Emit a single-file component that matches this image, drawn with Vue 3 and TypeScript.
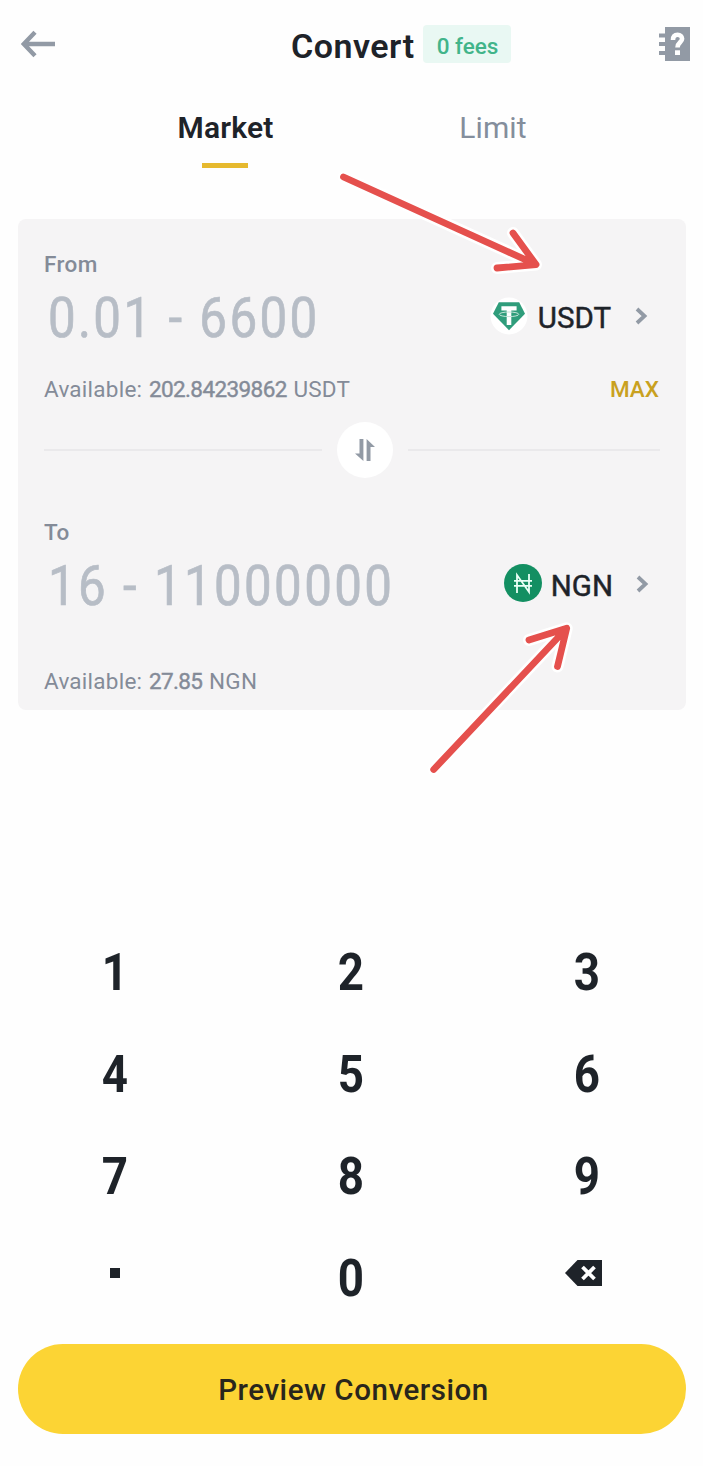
<script setup lang="ts">
import { ref } from 'vue'

const tabs = ['Market', 'Limit']
const active = ref('Market')
const keys = ['1', '2', '3', '4', '5', '6', '7', '8', '9', '.', '0', 'del']
</script>

<template>
  <main class="screen">
    <header class="header">
      <button class="icon-btn back" aria-label="Back">
        <svg width="34" height="28" viewBox="0 0 34 28">
          <path d="M14 2.200 2.800 14 14 25.800M3 14h31" fill="none" stroke="#929aa5" stroke-width="4.400" />
        </svg>
      </button>
      <h1 class="title">Convert</h1>
      <span class="badge">0 fees</span>
      <button class="icon-btn help" aria-label="Help">
        <svg width="31" height="34" viewBox="0 0 31 34">
          <path d="M6 0h25v34H6v-6H0v-4h6v-5H0v-4h6v-4.500H0v-4h6z" fill="#929aa5" />
          <path d="M14 13c0-3.700 1.800-5.200 4.600-5.200 2.700 0 4.500 1.500 4.500 4 0 3.600-4.600 3.500-4.600 8.700" fill="none" stroke="#fff" stroke-width="4.600" />
          <path d="M16 23.300h5v4.700h-5z" fill="#fff" />
        </svg>
      </button>
    </header>

    <nav class="tabs">
      <button v-for="t in tabs" :key="t" class="tab" :class="{ active: t === active }" @click="active = t">
        <span>{{ t }}</span>
      </button>
    </nav>

    <section class="card">
      <div class="label">From</div>
      <div class="row">
        <span class="amount">0.01 - 6600</span>
        <span class="coin tether">
          <svg width="38" height="38" viewBox="0 0 38 38">
            <circle cx="19" cy="19" r="18.500" fill="#fff" />
            <path d="M8.800 5.200h20.400l5.800 11.600L19 33.300 3 16.800z" fill="#2f9d7b" />
            <path d="M11.400 9.200h15.200v4.300h-5.300v14.500h-4.600v-14.500h-5.300z" fill="#fff" />
            <ellipse cx="19" cy="17.300" rx="9.800" ry="2.300" fill="none" stroke="#c5e4d9" stroke-width="1" />
          </svg>
          <span class="code usdt">USDT</span>
          <svg class="chev" width="13" height="18" viewBox="0 0 13 18">
            <path d="m2 2 7.500 7L2 16" fill="none" stroke="#929aa5" stroke-width="3.800" />
          </svg>
        </span>
      </div>
      <div class="row avail">
        <span class="bal">Available: <b>202.84239862</b> USDT</span>
        <span class="max">MAX</span>
      </div>
      <div class="divider">
        <i class="line left"></i>
        <button class="swap" aria-label="Swap">
          <svg width="20" height="22" viewBox="0 0 20 22">
            <path d="M4.500 0h3.900v22L0 14.500h4.500zM11.600 22V0L20 8h-4.500v14z" fill="#929aa5" />
          </svg>
        </button>
        <i class="line right"></i>
      </div>
      <div class="label to">To</div>
      <div class="row">
        <span class="amount second">16 - 11000000</span>
        <span class="coin naira">
          <svg width="38" height="38" viewBox="0 0 38 38">
            <circle cx="19" cy="19" r="19" fill="#138f62" />
            <path d="M13 29V11L25 28V10M10 16.800h18M10 21.800h18" fill="none" stroke="#e9fff6" stroke-width="1.800" />
          </svg>
          <span class="code ngn">NGN</span>
          <svg class="chev" width="13" height="18" viewBox="0 0 13 18">
            <path d="m2 2 7.500 7L2 16" fill="none" stroke="#929aa5" stroke-width="3.800" />
          </svg>
        </span>
      </div>
      <div class="row avail last">
        <span class="bal">Available: <b>27.85</b> NGN</span>
      </div>
    </section>

    <section class="keypad">
      <button v-for="k in keys" :key="k" class="key">
        <svg v-if="k === 'del'" class="del" width="37" height="26" viewBox="0 0 37 26">
          <path d="M12.500 0H37v26H12.500L0 13z" fill="#1e2329" />
          <path d="m17.500 7 12 12M29.500 7l-12 12" stroke="#fff" stroke-width="3.800" />
        </svg>
        <i v-else-if="k === '.'" class="dot"></i>
        <span v-else class="digit">{{ k }}</span>
      </button>
    </section>

    <button class="cta"><span>Preview Conversion</span></button>

    <svg class="arrows" width="703" height="1466" viewBox="0 0 703 1466">
      <g fill="none" stroke-linecap="round" stroke-linejoin="round">
        <g stroke="#fff" stroke-width="12">
          <path d="M343.500 177 536 264.500M513 233l23 31.600L497 268" />
          <path d="M433.700 769.500 566.500 628.500M529 640l37.700-11.700-9.200 38.200" />
        </g>
        <g stroke="#e5504d" stroke-width="6.800">
          <path d="M343.500 177 536 264.500M513 233l23 31.600L497 268" />
          <path d="M433.700 769.500 566.500 628.500M529 640l37.700-11.700-9.200 38.200" />
        </g>
      </g>
    </svg>
  </main>
</template>

<style>
body {
  margin: 0;
  background: #fefefe;
}
</style>

<style scoped>
.screen {
  position: relative;
  width: 703px;
  height: 1466px;
  overflow: hidden;
  background: #fefefe;
  color: #1e2329;
  font-family: Roboto, "Liberation Sans", sans-serif;
}
button {
  border: 0;
  padding: 0;
  background: none;
  font: inherit;
  color: inherit;
}
svg {
  display: block;
  flex: none;
}
.header {
  display: flex;
  align-items: center;
  height: 88px;
  padding: 0 13px 0 21px;
}
.title {
  margin: 0 0 0 236px;
  padding-top: 4px;
  width: 132px;
  font-size: 34px;
  line-height: 40px;
  font-weight: 600;
  letter-spacing: 0.5px;
  white-space: nowrap;
}
.badge {
  width: 88px;
  height: 38px;
  border-radius: 4px;
  background: #e9f8f3;
  color: #42b48a;
  font-size: 22.5px;
  font-weight: 500;
  line-height: 42px;
  text-align: center;
  text-indent: 1px;
}
.help {
  margin-left: auto;
}
.tabs {
  display: grid;
  grid-template-columns: 267px 267px;
  margin-left: 91px;
  padding-top: 10px;
}
.tab {
  display: flex;
  flex-direction: column;
  align-items: center;
  height: 70px;
  color: #848e9c;
  font-size: 30px;
  line-height: 60px;
  letter-spacing: 0.1px;
  text-indent: 3px;
}
.tab.active {
  color: #1e2329;
  font-weight: 600;
  letter-spacing: 0.2px;
  text-indent: 2px;
}
.tab.active::after {
  content: "";
  width: 46px;
  height: 5px;
  margin-top: 5px;
  background: #e6b92e;
}
.card {
  box-sizing: border-box;
  width: 668px;
  height: 491px;
  margin: 51px 0 0 18px;
  padding: 30px 26px 0;
  border-radius: 8px;
  background: #f5f4f5;
  color: #848b98;
  font-size: 22.5px;
  line-height: 30px;
}
.label {
  font-weight: 500;
  letter-spacing: 0.4px;
  margin-bottom: 9px;
}
.row {
  display: flex;
  align-items: center;
  justify-content: space-between;
  height: 60px;
}
.amount {
  width: 380px;
  margin-left: 4px;
  color: #b7bdc6;
  font-size: 56px;
  line-height: 60px;
  letter-spacing: 2.65px;
  word-spacing: 0.5px;
  white-space: nowrap;
  transform: scaleX(0.88);
  transform-origin: left;
  -webkit-text-stroke: 0.7px #b7bdc6;
}
.coin {
  display: flex;
  align-items: center;
  padding-right: 12px;
}
.coin svg {
  margin-top: -4px;
}
.naira {
  padding-right: 11px;
}
.naira svg:first-child {
  margin-top: -6px;
}
.code {
  margin-left: 10px;
  color: #1e2329;
  font-size: 29.5px;
  line-height: 60px;
  -webkit-text-stroke: 0.45px #1e2329;
}
.ngn {
  margin-left: 9px;
}
.chev {
  margin-left: 24px;
}
.naira .chev {
  margin-left: 23px;
}
.avail {
  height: 30px;
  margin-top: 26px;
}
.bal {
  letter-spacing: 0.25px;
  word-spacing: 0.8px;
}
.bal b {
  font-weight: 400;
  letter-spacing: -0.6px;
  -webkit-text-stroke: 0.4px #848b98;
}
.max {
  padding-right: 1px;
  color: #c9a11f;
  font-weight: 500;
}
.divider {
  display: flex;
  align-items: center;
  height: 56px;
  margin: 18px 0 39px;
}
.line {
  height: 2px;
  background: #eae9eb;
}
.left {
  width: 278px;
}
.right {
  width: 252px;
}
.swap {
  display: grid;
  place-items: center;
  width: 56px;
  height: 56px;
  margin: 0 15px;
  border-radius: 50%;
  background: #fff;
}
.last {
  margin-top: 50px;
}
.keypad {
  display: grid;
  grid-template-columns: repeat(3, 236px);
  grid-auto-rows: 102px;
  justify-content: center;
  width: 702px;
  margin-top: 212px;
}
.key {
  display: flex;
  align-items: center;
  justify-content: center;
  font-size: 52px;
  font-weight: 700;
  line-height: 102px;
}
.digit {
  transform: scaleX(0.88);
}
.dot {
  width: 10px;
  height: 10px;
  margin: 0 1px 12px 0;
  background: #1e2329;
}
.del {
  margin: 0 8px 13px 0;
}
.cta {
  display: block;
  width: 668px;
  height: 90px;
  margin: 14px 0 0 18px;
  border-radius: 45px;
  background: #fcd434;
  color: #29261c;
  font-size: 29.5px;
  font-weight: 500;
  line-height: 92px;
  letter-spacing: 0.55px;
  text-indent: 3px;
}
.arrows {
  position: absolute;
  inset: 0;
  pointer-events: none;
}
</style>
